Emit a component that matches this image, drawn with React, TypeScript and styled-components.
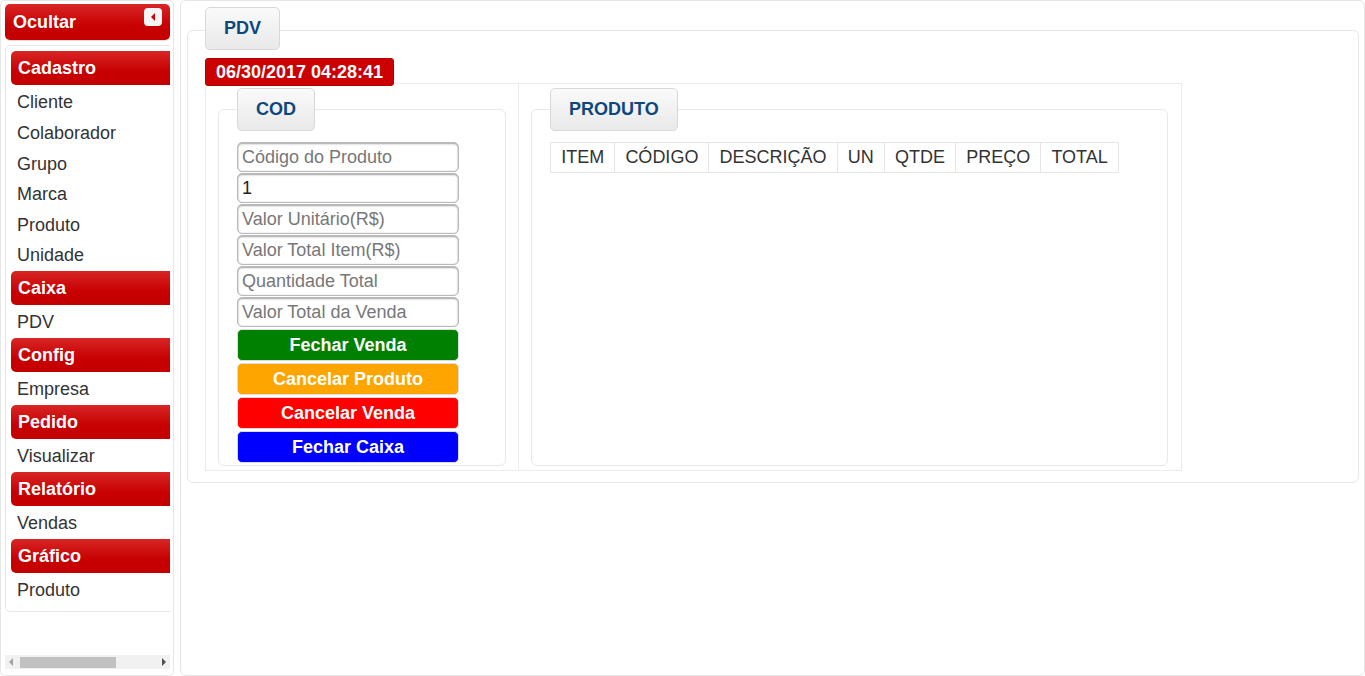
import React from 'react';
import styled, { createGlobalStyle } from 'styled-components';

const GlobalStyle = createGlobalStyle`
  * { box-sizing: border-box; }
  html, body { margin: 0; padding: 0; background: #fff; }
  body {
    font-family: 'Liberation Sans', Arial, sans-serif;
    font-size: 18px;
    color: #333;
  }
`;

const Page = styled.div`
  display: flex;
  gap: 6px;
  height: 676px;
  width: 1365px;
`;

const Sidebar = styled.aside`
  width: 174px;
  flex: none;
  height: 676px;
  border: 1px solid #e6e6e6;
  border-radius: 5px;
  padding: 3px 3px 6px 4px;
  display: flex;
  flex-direction: column;
`;

const redBar = `
  background: linear-gradient(#d82626, #c70000 60%, #c40000);
  color: #fff;
  font-weight: bold;
  font-size: 18px;
  border-radius: 5px;
`;

const HideBar = styled.div`
  ${redBar}
  height: 36px;
  display: flex;
  justify-content: space-between;
  align-items: flex-start;
  padding: 4px 8px 0 8px;
  line-height: 28px;
  box-shadow: 0 1px 1px rgba(0, 0, 0, 0.15);
`;

const HideButton = styled.span`
  width: 18px;
  height: 18px;
  background: #f5f5f5;
  border-radius: 4px;
  display: flex;
  align-items: center;
  justify-content: center;
`;

const ScrollArea = styled.div`
  margin-top: 5px;
  flex: 1;
  display: flex;
  flex-direction: column;
  width: 165px;
`;

const Viewport = styled.div`
  flex: 1;
  overflow: hidden;
`;

const MenuPanel = styled.nav`
  width: 240px;
  border: 1px solid #e8e8e8;
  border-radius: 5px;
  padding: 5px;
`;

const MenuHeader = styled.div`
  ${redBar}
  height: 34px;
  line-height: 34px;
  padding-left: 7px;
`;

const MenuList = styled.div`
  padding-top: 2.4px;
`;

const MenuItem = styled.div`
  line-height: 30.6px;
  padding-left: 6px;
  color: #333;
`;

const ScrollBar = styled.div`
  height: 14px;
  background: #f1f1f1;
  display: flex;
  align-items: center;
  padding: 0 4px 0 4px;
`;

const Thumb = styled.div`
  margin-left: 7px;
  width: 96px;
  height: 11px;
  background: #c1c1c1;
`;

const Arrow = styled.span<{ $dir: 'left' | 'right'; $dim?: boolean }>`
  width: 0;
  height: 0;
  border-top: 4px solid transparent;
  border-bottom: 4px solid transparent;
  ${(p) =>
    p.$dir === 'left'
      ? `border-right: 4px solid ${p.$dim ? '#a3a3a3' : '#505050'};`
      : `border-left: 4px solid ${p.$dim ? '#a3a3a3' : '#505050'}; margin-left: auto;`}
`;

const Main = styled.main`
  flex: 1;
  height: 676px;
  border: 1px solid #e6e6e6;
  border-radius: 6px;
  padding: 29px 5px 0 6px;
`;

const Fieldset = styled.div<{ $pad?: string; $grow?: boolean }>`
  border: 1px solid #e8e8e8;
  border-radius: 6px;
  padding: ${(p) => p.$pad || '0 18px 0 18px'};
  ${(p) => (p.$grow ? 'flex: 1;' : '')}
`;

const Legend = styled.div<{ $top: number; $gap: number }>`
  display: block;
  width: fit-content;
  margin-top: ${(p) => -p.$top}px;
  margin-bottom: ${(p) => p.$gap}px;
  height: 43px;
  line-height: 41px;
  padding: 0 18px;
  background: linear-gradient(#fafafa, #e9e9e9);
  border: 1px solid #d8d8d8;
  border-radius: 5px;
  color: #0e477b;
  font-weight: bold;
  font-size: 18px;
`;

const Clock = styled.div`
  width: 189px;
  height: 28px;
  line-height: 26px;
  background: #cc0000;
  border: 1px solid #b80000;
  border-radius: 3px;
  color: #fff;
  font-weight: bold;
  font-size: 18px;
  text-align: center;
  margin-bottom: -3px;
  position: relative;
  z-index: 1;
`;

const Board = styled.div`
  width: 977px;
  height: 388px;
  border: 1px solid #ececec;
  display: flex;
`;

const LeftCell = styled.div`
  width: 313px;
  border-right: 1px solid #ececec;
  padding: 25px 12px 4px 12px;
  display: flex;
  flex-direction: column;
`;

const RightCell = styled.div`
  flex: 1;
  padding: 25px 13px 4px 12px;
  display: flex;
  flex-direction: column;
`;

const Stack = styled.div`
  display: flex;
  flex-direction: column;
  width: 222px;
`;

const Field = styled.input`
  width: 222px;
  height: 30px;
  margin-bottom: 1px;
  border: 1px solid #b9b9b9;
  border-radius: 5px;
  box-shadow: inset 0 1px 2px rgba(0, 0, 0, 0.35), inset 0 0 1px rgba(0, 0, 0, 0.3);
  padding: 0 4px;
  font-family: inherit;
  font-size: 18px;
  color: #222;
  background: #fff;
  outline: none;
  &::placeholder {
    color: #777;
  }
`;

const Action = styled.button<{ $bg: string; $first?: boolean }>`
  width: 222px;
  height: 32px;
  margin-top: ${(p) => (p.$first ? 1 : 2)}px;
  background: ${(p) => p.$bg};
  border: 1px solid #dcdcdc;
  border-radius: 5px;
  color: #fff;
  font-family: inherit;
  font-weight: bold;
  font-size: 18px;
  padding: 0;
`;

const Grid = styled.table`
  border-collapse: collapse;
  font-size: 18px;
  color: #333;
`;

const Th = styled.td`
  border: 1px solid #e6e6e6;
  height: 30px;
  padding: 0 10px 0 10.2px;
  white-space: nowrap;
`;

const menu: { title: string; items: string[] }[] = [
  { title: 'Cadastro', items: ['Cliente', 'Colaborador', 'Grupo', 'Marca', 'Produto', 'Unidade'] },
  { title: 'Caixa', items: ['PDV'] },
  { title: 'Config', items: ['Empresa'] },
  { title: 'Pedido', items: ['Visualizar'] },
  { title: 'Relatório', items: ['Vendas'] },
  { title: 'Gráfico', items: ['Produto'] },
];

const columns = ['ITEM', 'CÓDIGO', 'DESCRIÇÃO', 'UN', 'QTDE', 'PREÇO', 'TOTAL'];

const App = () => {
  return (
    <Page>
      <GlobalStyle />
      <Sidebar>
        <HideBar>
          <span>Ocultar</span>
          <HideButton>
            <svg width="6" height="8" viewBox="0 0 6 8">
              <polygon points="5,0 5,8 1,4" fill="#c00" />
            </svg>
          </HideButton>
        </HideBar>
        <ScrollArea>
          <Viewport>
            <MenuPanel>
              {menu.map((g) => (
                <div key={g.title}>
                  <MenuHeader>{g.title}</MenuHeader>
                  <MenuList>
                    {g.items.map((i) => (
                      <MenuItem key={i}>{i}</MenuItem>
                    ))}
                  </MenuList>
                </div>
              ))}
            </MenuPanel>
          </Viewport>
          <ScrollBar>
            <Arrow $dir="left" $dim />
            <Thumb />
            <Arrow $dir="right" />
          </ScrollBar>
        </ScrollArea>
      </Sidebar>
      <Main>
        <Fieldset $pad="0 17px 11px 17px">
          <Legend $top={24} $gap={8}>PDV</Legend>
          <Clock>06/30/2017 04:28:41</Clock>
          <Board>
            <LeftCell>
              <Fieldset $pad="0 18px 1px 18px" $grow>
                <Legend $top={22} $gap={11}>COD</Legend>
                <Stack>
                  <Field placeholder="Código do Produto" />
                  <Field defaultValue="1" />
                  <Field placeholder="Valor Unitário(R$)" />
                  <Field placeholder="Valor Total Item(R$)" />
                  <Field placeholder="Quantidade Total" />
                  <Field placeholder="Valor Total da Venda" />
                  <Action $bg="#008000" $first>Fechar Venda</Action>
                  <Action $bg="#ffa500">Cancelar Produto</Action>
                  <Action $bg="#ff0000">Cancelar Venda</Action>
                  <Action $bg="#0000ff">Fechar Caixa</Action>
                </Stack>
              </Fieldset>
            </LeftCell>
            <RightCell>
              <Fieldset $pad="0 18px 0 18px" $grow>
                <Legend $top={22} $gap={11}>PRODUTO</Legend>
                <Grid>
                  <tbody>
                    <tr>
                      {columns.map((c) => (
                        <Th key={c}>{c}</Th>
                      ))}
                    </tr>
                  </tbody>
                </Grid>
              </Fieldset>
            </RightCell>
          </Board>
        </Fieldset>
      </Main>
    </Page>
  );
};

export default App;
